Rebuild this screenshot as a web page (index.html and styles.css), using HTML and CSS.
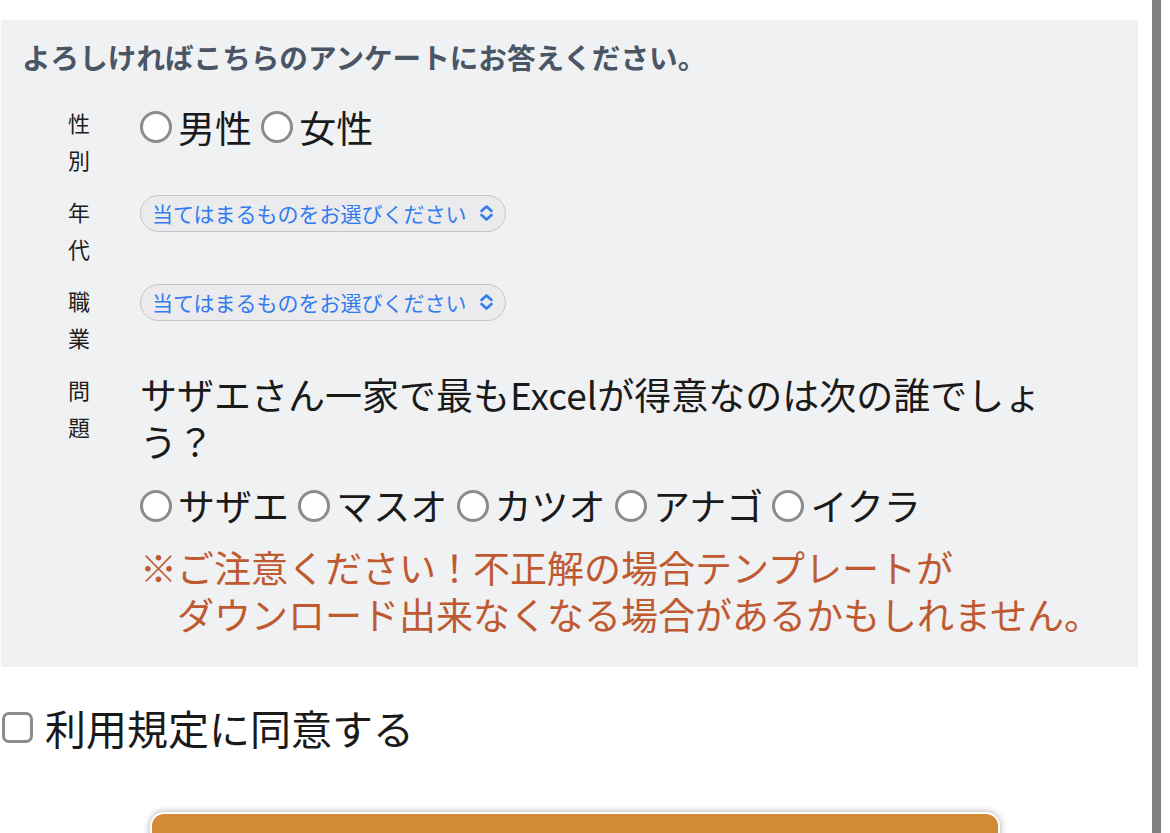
FILE: index.html
```html
<!DOCTYPE html>
<html lang="ja">
<head>
<meta charset="utf-8">
<title>アンケート</title>
<link rel="stylesheet" href="styles.css">
</head>
<body>
<div class="page">
  <main class="main">
    <section class="survey">
      <h2 class="survey-title">よろしければこちらのアンケートにお答えください。</h2>

      <div class="row">
        <div class="label">性別</div>
        <div class="field">
          <label class="choice"><input class="radio" type="radio" name="sex">男性</label>
          <label class="choice"><input class="radio" type="radio" name="sex">女性</label>
        </div>
      </div>

      <div class="row">
        <div class="label">年代</div>
        <div class="field">
          <div class="select">
            <span class="select-text">当てはまるものをお選びください</span>
            <svg class="select-arrow" width="15" height="20" viewBox="0 0 15 20"><path d="M2.5 8 L7.5 3.5 L12.5 8 M2.5 12 L7.5 16.5 L12.5 12" fill="none" stroke="#2f7cf0" stroke-width="2.6" stroke-linecap="round" stroke-linejoin="round"/></svg>
          </div>
        </div>
      </div>

      <div class="row">
        <div class="label">職業</div>
        <div class="field">
          <div class="select">
            <span class="select-text">当てはまるものをお選びください</span>
            <svg class="select-arrow" width="15" height="20" viewBox="0 0 15 20"><path d="M2.5 8 L7.5 3.5 L12.5 8 M2.5 12 L7.5 16.5 L12.5 12" fill="none" stroke="#2f7cf0" stroke-width="2.6" stroke-linecap="round" stroke-linejoin="round"/></svg>
          </div>
        </div>
      </div>

      <div class="row row-q">
        <div class="label">問題</div>
        <div class="field">
          <p class="question">サザエさん一家で最もExcelが得意なのは次の誰でしょう？</p>
          <div class="answers">
            <label class="choice"><input class="radio" type="radio" name="q">サザエ</label>
            <label class="choice"><input class="radio" type="radio" name="q">マスオ</label>
            <label class="choice"><input class="radio" type="radio" name="q">カツオ</label>
            <label class="choice"><input class="radio" type="radio" name="q">アナゴ</label>
            <label class="choice"><input class="radio" type="radio" name="q">イクラ</label>
          </div>
          <p class="note">※ご注意ください！不正解の場合テンプレートが<br>　ダウンロード出来なくなる場合があるかもしれません。</p>
        </div>
      </div>
    </section>

    <label class="agree"><input class="checkbox" type="checkbox">利用規定に同意する</label>

    <div class="btn-wrap">
      <a class="dl-btn">ダウンロード</a>
    </div>
  </main>
  <div class="bar"></div>
</div>
</body>
</html>
```

FILE: styles.css
```css
html, body {
  margin: 0;
  padding: 0;
  height: 833px;
  overflow: hidden;
  background: #ffffff;
}

body {
  font-family: "Noto Sans CJK JP", "Noto Sans", sans-serif;
  color: #1a1a1a;
}

.page {
  display: flex;
  width: 1170px;
  height: 833px;
}

.main {
  width: 1152px;
  padding-top: 20px;
  flex: none;
}

.bar {
  width: 9px;
  height: 833px;
  background: #808080;
  flex: none;
}

.survey {
  margin-left: 1px;
  width: 1137px;
  box-sizing: border-box;
  background: #f0f1f3;
  padding: 20px 0 29px 0;
}

.survey-title {
  margin: 0 0 30px 21px;
  font-size: 28.6px;
  line-height: 34px;
  font-weight: 700;
  color: #4a5566;
}

.row {
  display: flex;
  align-items: flex-start;
  padding-left: 67px;
  margin-bottom: 15px;
}

.row-q {
  margin-top: 3px;
  margin-bottom: 0;
}

.label {
  width: 24px;
  flex: none;
  font-size: 22px;
  line-height: 37px;
  color: #1e1e1e;
  word-break: break-all;
}

.field {
  margin-left: 48px;
  font-size: 37px;
  line-height: 46px;
}

.choice {
  display: inline-flex;
  align-items: center;
  margin-right: 1px;
  color: #1a1a1a;
}

.radio {
  appearance: none;
  -webkit-appearance: none;
  width: 32px;
  height: 32px;
  min-width: 32px;
  margin: 0 6px 0 0;
  border: 3px solid #8c8c8c;
  border-radius: 50%;
  background: #ffffff;
  box-sizing: border-box;
  flex: none;
}

.select {
  display: flex;
  align-items: center;
  justify-content: space-between;
  margin-top: 1.5px;
  height: 37px;
  width: 366px;
  box-sizing: border-box;
  padding: 0 11px 0 11px;
  border: 1.5px solid #c5c5c8;
  border-radius: 19px;
  background: #ebebed;
}

.select-text {
  font-size: 21px;
  line-height: 28px;
  color: #2f7cf0;
}

.select-arrow {
  display: block;
}

.question {
  margin: 0;
  max-width: 930px;
  font-size: 37px;
  line-height: 47px;
  color: #1a1a1a;
}

.answers {
  margin-top: 17px;
  line-height: 47px;
}

.note {
  margin: 14px 0 0 0;
  font-size: 37px;
  line-height: 47px;
  color: #bf5a30;
  white-space: nowrap;
}

.agree {
  display: flex;
  align-items: center;
  margin-top: 35px;
  margin-left: 2px;
  font-size: 41px;
  line-height: 50px;
  color: #1a1a1a;
}

.checkbox {
  appearance: none;
  -webkit-appearance: none;
  width: 31px;
  height: 31px;
  min-width: 31px;
  margin: 2px 12px 0 0;
  border: 3px solid #8c8c8c;
  border-radius: 7px;
  background: #ffffff;
  box-sizing: border-box;
  flex: none;
}

.btn-wrap {
  margin-top: 60px;
  padding-left: 150px;
}

.dl-btn {
  display: block;
  width: 850px;
  height: 90px;
  box-sizing: border-box;
  border: 2.5px solid #ffffff;
  border-radius: 14px;
  background: #d28b34;
  box-shadow: 0 0 7px rgba(0, 0, 0, 0.35);
  color: #ffffff;
  font-size: 36px;
  font-weight: 700;
  text-align: center;
  padding-top: 18px;
  line-height: 47px;
}
```
